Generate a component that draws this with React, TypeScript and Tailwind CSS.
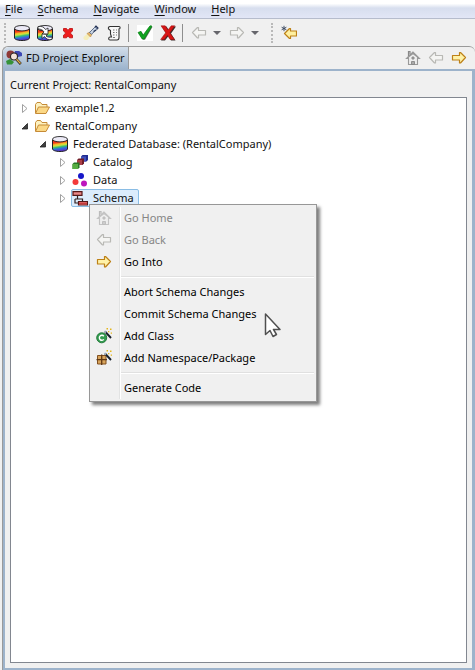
import type { ReactNode } from 'react';

type IconProps = { className?: string };

function Svg({ children, className = '' }: { children: ReactNode; className?: string }) {
  return (
    <svg viewBox="0 0 16 16" width="16" height="16" aria-hidden="true" className={`block shrink-0 ${className}`}>
      {children}
    </svg>
  );
}

function Cylinder() {
  return (
    <>
      <path d="M.5 3.500v9.500c0 1 2.500 2.500 7.500 2.500s7.500-1.500 7.500-2.500V3.500z" fill="url(#rainbow)" stroke="#222" />
      <ellipse cx="8" cy="3.200" rx="7.500" ry="2.700" fill="#eceaf6" stroke="#222" strokeWidth=".9" />
    </>
  );
}

function DatabaseIcon() {
  return (
    <Svg>
      <defs>
        <linearGradient id="rainbow" x1="0" y1="0" x2="0.2" y2="1">
          <stop offset="0.3" stopColor="#f03a1a" />
          <stop offset="0.44" stopColor="#f8b828" />
          <stop offset="0.56" stopColor="#c8e440" />
          <stop offset="0.68" stopColor="#38c070" />
          <stop offset="0.82" stopColor="#3070e0" />
          <stop offset="1" stopColor="#5838c8" />
        </linearGradient>
      </defs>
      <Cylinder />
    </Svg>
  );
}

function RefreshDatabaseIcon() {
  return (
    <Svg>
      <Cylinder />
      <path d="M1 1.500c4-.5 6 .5 7.500 3L11 3v6H5l2-2C6 5 4 4 1 4z" fill="#fff" stroke="#222" strokeWidth=".8" />
      <path d="M15 14.500c-4 .5-6-.5-7.500-3L5 13.500V9l5.500.5-1.500 1.500c1 1 3 1.500 6 1z" fill="#fff" stroke="#222" strokeWidth=".8" />
    </Svg>
  );
}

function DeleteIcon() {
  return (
    <Svg>
      <path d="M3.500 3.500h3L8 5.500l1.500-2h3V6l-2.300 2 2.300 2.200v2.600h-3L8 10.800l-1.500 2h-3v-2.600L5.800 8 3.500 6z" fill="#ee1c1c" stroke="#c01818" strokeWidth=".9" />
    </Svg>
  );
}

function TorchIcon() {
  return (
    <Svg>
      <path d="M.5 12l4-3.500 3 2.500-3 4H2L.5 14z" fill="#f5eebc" />
      <path d="M4 8.500l3-1.500 2 2-1.500 3z" fill="#e8b868" stroke="#b88848" strokeWidth=".6" />
      <path d="M6.500 7.500L12 2l2.200 2.200-5.700 5z" fill="#c8d4e4" stroke="#53627c" strokeWidth=".9" />
      <path d="M10.500 6.500l2.500-1.500M12 2l1-1 2 2-1 1.200" fill="#8393b5" stroke="#263456" strokeWidth="1.200" />
    </Svg>
  );
}

function ScrollIcon() {
  return (
    <Svg>
      <path d="M4 1.500h9c1.500 0 1.500 2.500 0 2.500v8.500c0 2-1 2.500-2 2.500H4c-2 0-1.500-3 0-3h1.500L4.500 9V5.500L2.500 4c-.5-1.500.5-2.500 1.500-2.500z" fill="#f8f8f8" stroke="#333" strokeWidth="1.100" />
      <path d="M7 5h1.500M10 5h1M7 7.500h1.500M10 7.500h1M7 10h1.500M10 10h1M7 12.500h2" fill="none" stroke="#777" />
    </Svg>
  );
}

function CommitIcon() {
  return (
    <Svg>
      <path d="M0 0h16v16H0z" fill="#fff" />
      <path d="M1.800 8.300l3-1.300 2 4L13.500 1.500l2 .5L8 14.800H6z" fill="#707b70" />
      <path d="M1 7.500L4 6.300l2 4L13 .8l2 .3L7.300 14H5.200z" fill="#10a620" stroke="#087b14" strokeWidth=".7" />
    </Svg>
  );
}

function AbortIcon() {
  return (
    <Svg>
      <path d="M2 1.500h4.500L9 5.500l3.500-4H16L11 8.500l4.500 7H11L8.500 11 5 15.500H1L6.200 8.500z" fill="#3c2c2c" />
      <path d="M1 .8h4.200L8 5l3.200-4.200h3.600L9.800 7.700l4.700 6.800h-4.300L7.500 10.200l-3.300 4.300H.6L5.700 7.700z" fill="#d81515" stroke="#9b1111" strokeWidth=".5" />
    </Svg>
  );
}

type Tone = 'gold' | 'muted';
const toneFill = { gold: '#fff2a8', muted: '#f5f5f3' };
const toneStroke = { gold: '#bd8117', muted: '#b9b9b5' };

function RightArrow({ tone }: { tone: Tone }) {
  return (
    <Svg>
      <path d="M1.500 5.500h7v-3h1l5 5-5 5.500h-1v-3h-7z" fill={toneFill[tone]} stroke={toneStroke[tone]} strokeWidth="1.200" strokeLinejoin="round" />
    </Svg>
  );
}

function LeftArrow({ tone }: { tone: Tone }) {
  return (
    <Svg>
      <path d="M14.500 5.500h-7v-3h-1l-5 5 5 5.500h1v-3h7z" fill={toneFill[tone]} stroke={toneStroke[tone]} strokeWidth="1.200" strokeLinejoin="round" />
    </Svg>
  );
}

function LastEditIcon() {
  return (
    <Svg>
      <path d="M15.500 6h-6V3.500h-1L3.500 8.500l5 5h1V11h6z" fill="#fff0a0" stroke="#bd8117" strokeWidth="1.200" strokeLinejoin="round" />
      <path d="M3 .8v5.400M.6 2.200l4.800 2.600M5.400 2.200L.6 4.800" stroke="#33435c" strokeWidth=".9" />
    </Svg>
  );
}

function HomeIcon({ className }: IconProps) {
  return (
    <Svg className={className}>
      <path d="M3.500 8v6.500h9V8M8 2L1.500 8.500h2V7L8 3.500 12.500 7v1.500h2z" fill="#ededed" stroke="#999" strokeWidth="1.100" />
      <path d="M3.500 6V1.500H5V4.500" fill="none" stroke="#888" strokeWidth="1.200" />
      <path d="M6.500 14.500v-3h3v3zM7 7h2v2H7z" fill="#aaa" stroke="#888" strokeWidth=".9" />
    </Svg>
  );
}

function ExplorerIcon() {
  return (
    <Svg>
      <path d="M9 1h4l3 2v3l-4 1-4-3z" fill="#3d48b4" />
      <path d="M0 11l4-2 4 3-2 2.500H1z" fill="#359238" />
      <circle cx="4.500" cy="4.500" r="4" fill="#8f3a38" />
      <circle cx="8" cy="6.500" r="3.500" fill="#f3e3d9" stroke="#292424" strokeWidth="1.100" />
      <path d="M10.500 9.300l4.300 4.700" stroke="#252020" strokeWidth="2.600" />
      <path d="M10.500 9.200l4 4.300" stroke="#e3ae45" strokeWidth="1.300" />
    </Svg>
  );
}

function FolderIcon() {
  return (
    <Svg>
      <path d="M1.500 13V4.500l1.500-2h3.500l1.500 2h5V7" fill="#fdf2c0" stroke="#c68b37" />
      <path d="M1.500 13.500L4.500 7h11l-3.500 6.500z" fill="#fbd886" stroke="#c68b37" strokeLinejoin="round" />
    </Svg>
  );
}

function CatalogIcon() {
  return (
    <Svg>
      <path d="M9 2.500L10.500 1H16v5l-1.500 1.500H9z" fill="#202c91" />
      <path d="M9 2.500h5v5H9z" fill="#4252bd" />
      <path d="M5 6l1.500-1.500H12v5L10.500 11H5z" fill="#701c27" />
      <path d="M5 6h5v5H5z" fill="#ab3e48" />
      <path d="M.5 10L2 8.500h5.500v5L6 15H.5z" fill="#287525" />
      <path d="M.5 10H6v5H.5z" fill="#57ad42" />
    </Svg>
  );
}

function DataIcon() {
  return (
    <Svg>
      <circle cx="9" cy="4" r="3" fill="#1717c9" />
      <circle cx="3.500" cy="10" r="3" fill="#f33939" />
      <circle cx="12" cy="11.500" r="3" fill="#bd15bd" />
    </Svg>
  );
}

function SchemaIcon() {
  return (
    <Svg>
      <path d="M1 1.700h9v3.600H1zM6.500 11.500h9v3.500h-9z" fill="#ea8888" stroke="#571818" strokeWidth="1.200" />
      <path d="M7 12.500h8v2H7z" fill="#c83c3c" />
      <path d="M5.500 5.500V9M3 9h7.500v2.500M3 9v4h3" fill="none" stroke="#332020" strokeWidth="1.200" />
    </Svg>
  );
}

function Wand() {
  return (
    <>
      <path d="M9 3.500l6 6.500" stroke="#18202b" strokeWidth="1.900" />
      <path d="M8.500 3l1.500 1.600" stroke="#a7b5c4" strokeWidth="1.600" />
      <path d="M10.500 0H12v1.500h-1.500zM14 .5h1.500V2H14zM12 3h1.300v1.300H12zM14.700 4.500H16v1.300h-1.300z" fill="#e3b51b" />
    </>
  );
}

function AddClassIcon() {
  return (
    <Svg>
      <circle cx="5.700" cy="9.800" r="5" fill="#349c50" stroke="#237a3b" />
      <path d="M7.800 8.200A2.500 2.500 0 1 0 7.800 11.400" fill="none" stroke="#fff" strokeWidth="1.400" />
      <Wand />
    </Svg>
  );
}

function AddPackageIcon() {
  return (
    <Svg>
      <path d="M1.500 5.500h8.500v8.500H1.500z" fill="#d8a45b" stroke="#815020" />
      <path d="M5.700 4.500v10.500M.5 9.700H11" stroke="#603813" strokeWidth="1.300" />
      <Wand />
    </Svg>
  );
}

function Grip() {
  return <span aria-hidden="true" className="h-5 w-0.5 shrink-0 border-l-2 border-dotted border-[#b9b9b9]" />;
}

function ToolButton({ label, children, disabled }: { label: string; children: ReactNode; disabled?: boolean }) {
  return (
    <button type="button" aria-label={label} disabled={disabled} className="flex h-6 w-4 items-center justify-center">
      {children}
    </button>
  );
}

function Caret() {
  return (
    <svg viewBox="0 0 8 4" width="8" height="4" aria-hidden="true">
      <path d="M0 0h8L4 4z" fill="#66666c" />
    </svg>
  );
}

function HistoryButton({ label, children }: { label: string; children: ReactNode }) {
  return (
    <div className="flex items-center gap-1.5">
      <ToolButton label={label} disabled>{children}</ToolButton>
      <button type="button" aria-label={`${label} history`} className="flex h-6 w-2 items-center"><Caret /></button>
    </div>
  );
}

const menus = ['File', 'Schema', 'Navigate', 'Window', 'Help'];

function Twisty({ open }: { open?: boolean }) {
  return (
    <svg viewBox="0 0 8 10" width="8" height="10" aria-hidden="true" className="block shrink-0">
      {open ? <path d="M6.500 2.500v5.500H1z" fill="#404040" stroke="#222" strokeWidth=".8" /> : <path d="M1.500 1.500v8l4.500-4z" fill="#fff" stroke="#a0a0a0" />}
    </svg>
  );
}

const indents = ['pl-2.5', 'pl-7', 'pl-12'];

function TreeRow({ level, open, icon, label, selected, children }: {
  level: number; open?: boolean; icon: ReactNode; label: string; selected?: boolean; children?: ReactNode;
}) {
  return (
    <li role="treeitem" aria-level={level + 1} aria-expanded={!!open} aria-selected={!!selected} className={`relative flex h-[18px] items-center gap-1 ${indents[level]}`}>
      <Twisty open={open} />
      <button
        type="button"
        className={`flex h-[18px] items-center gap-[5px] rounded-xs border pr-1 whitespace-nowrap ${selected ? 'border-[#8abde5] bg-[#dcecfc]' : 'border-transparent'}`}
      >
        {icon}
        {label}
      </button>
      {children}
    </li>
  );
}

function MenuItem({ label, icon, disabled }: { label: string; icon?: ReactNode; disabled?: boolean }) {
  return (
    <button type="button" role="menuitem" disabled={disabled} className="flex h-[22px] w-full items-center gap-3 pl-1 text-left whitespace-nowrap text-black disabled:text-[#868686]">
      <span className="w-4">{icon}</span>
      {label}
    </button>
  );
}

function MenuSeparator() {
  return (
    <div role="separator" className="flex h-2 items-center pl-7">
      <span className="h-0.5 w-full border-t border-b border-t-[#e0e0e0] border-b-white" />
    </div>
  );
}

function Pointer() {
  return (
    <svg viewBox="0 0 18 26" width="18" height="26" aria-hidden="true" className="pointer-events-none absolute top-[108px] left-[174px]">
      <path d="M1.500 1v20.500l4.500-4 3 6 3.500-2-3-5h6.500z" fill="#fff" stroke="#505050" strokeWidth="1.500" strokeLinejoin="round" />
    </svg>
  );
}

function ContextMenu() {
  return (
    <div role="menu" aria-label="Schema actions" className="absolute top-[15px] left-[78px] z-10 w-[228px] border border-[#979797] bg-[#f0f0f0] p-0.5 shadow-[3px_3px_3px_rgba(0,0,0,0.5)]">
      <span aria-hidden="true" className="absolute top-0.5 bottom-0.5 left-[29px] border-l border-r border-l-[#e2e3e3] border-r-white" />
      <MenuItem label="Go Home" icon={<HomeIcon className="opacity-50" />} disabled />
      <MenuItem label="Go Back" icon={<LeftArrow tone="muted" />} disabled />
      <MenuItem label="Go Into" icon={<RightArrow tone="gold" />} />
      <MenuSeparator />
      <MenuItem label="Abort Schema Changes" />
      <MenuItem label="Commit Schema Changes" />
      <MenuItem label="Add Class" icon={<AddClassIcon />} />
      <MenuItem label="Add Namespace/Package" icon={<AddPackageIcon />} />
      <MenuSeparator />
      <MenuItem label="Generate Code" />
      <Pointer />
    </div>
  );
}

export default function App() {
  return (
    <div className="flex min-h-screen flex-col bg-[#f0f0f0] font-['Noto_Sans',sans-serif] text-[11px] leading-4 text-[#111]">
      <nav className="flex h-[19px] items-center gap-[15px] border-b border-[#b6bccc] bg-linear-to-b from-white from-20% via-[#d7deee] via-45% to-[#e2e6f6] px-[5px]">
        {menus.map((name) => (
          <button key={name} type="button" className="whitespace-nowrap">
            <span className="underline underline-offset-2">{name[0]}</span>{name.slice(1)}
          </button>
        ))}
      </nav>

      <div role="toolbar" aria-label="Main" className="flex h-[27px] items-center px-1">
        <Grip />
        <div className="flex items-center gap-[7px] pl-2">
          <ToolButton label="Open database"><DatabaseIcon /></ToolButton>
          <ToolButton label="Refresh database"><RefreshDatabaseIcon /></ToolButton>
          <ToolButton label="Delete"><DeleteIcon /></ToolButton>
          <ToolButton label="Search"><TorchIcon /></ToolButton>
          <ToolButton label="Script"><ScrollIcon /></ToolButton>
        </div>
        <span className="mr-2 ml-1.5 h-[18px] border-l border-[#8e8e8e]" />
        <div className="flex items-center gap-[7px]">
          <ToolButton label="Commit"><CommitIcon /></ToolButton>
          <ToolButton label="Abort"><AbortIcon /></ToolButton>
        </div>
        <span className="mr-2 ml-1.5 h-[18px] border-l border-[#8e8e8e]" />
        <div className="flex items-center gap-2 pr-3">
          <HistoryButton label="Back"><LeftArrow tone="muted" /></HistoryButton>
          <HistoryButton label="Forward"><RightArrow tone="muted" /></HistoryButton>
        </div>
        <Grip />
        <div className="pl-2"><ToolButton label="Last edit location"><LastEditIcon /></ToolButton></div>
      </div>

      <section className="ml-0.5 flex grow flex-col rounded-t-md border-t border-l border-[#9a9a9a]">
        <header className="flex h-[22px] items-stretch justify-between">
          <h1 className="flex items-center gap-1 rounded-tl-md border-r border-[#9a9a9a] bg-linear-to-b from-[#d3deea] to-[#9cb4cd] px-[3px] whitespace-nowrap">
            <ExplorerIcon />
            FD Project Explorer
          </h1>
          <div className="flex items-center gap-[7px] pr-2">
            <ToolButton label="Home"><HomeIcon /></ToolButton>
            <ToolButton label="Back" disabled><LeftArrow tone="muted" /></ToolButton>
            <ToolButton label="Into"><RightArrow tone="gold" /></ToolButton>
          </div>
        </header>
        <div className="flex grow flex-col border-2 border-r-[3px] border-[#9db3cb] px-[5px] pb-[5px]">
          <h2 className="flex h-[26px] items-center pt-0.5">Current Project: RentalCompany</h2>
          <ul role="tree" aria-label="Projects" className="grow border border-[#828790] bg-white pt-px">
            <TreeRow level={0} icon={<FolderIcon />} label="example1.2" />
            <TreeRow level={0} open icon={<FolderIcon />} label="RentalCompany" />
            <TreeRow level={1} open icon={<DatabaseIcon />} label="Federated Database: (RentalCompany)" />
            <TreeRow level={2} icon={<CatalogIcon />} label="Catalog" />
            <TreeRow level={2} icon={<DataIcon />} label="Data" />
            <TreeRow level={2} icon={<SchemaIcon />} label="Schema" selected>
              <ContextMenu />
            </TreeRow>
          </ul>
        </div>
      </section>
    </div>
  );
}
